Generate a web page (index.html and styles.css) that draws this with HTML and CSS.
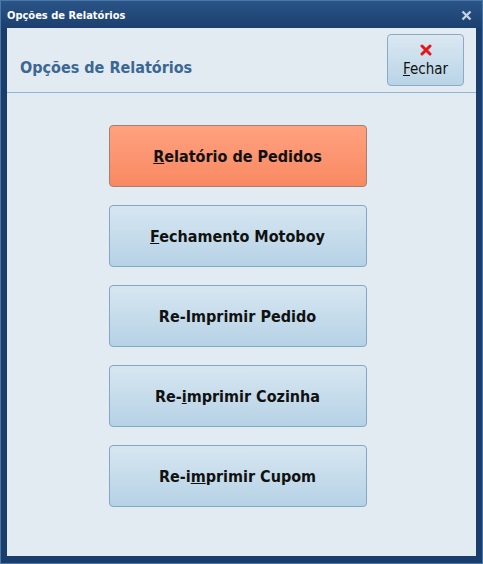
FILE: index.html
```html
<!DOCTYPE html>
<html lang="pt-BR">
<head>
    <meta charset="UTF-8">
    <title>Opções de Relatórios</title>
    <link rel="stylesheet" href="styles.css">
</head>
<body>
<div class="window">
    <div class="titlebar">
        <span class="title">Opções de Relatórios</span>
        <svg class="close" width="11" height="11" viewBox="0 0 11 11">
            <path d="M1.5 1.5 L9.5 9.5 M9.5 1.5 L1.5 9.5" stroke="#c3d2e3" stroke-width="2.4"/>
        </svg>
    </div>
    <div class="client">
        <div class="header">
            <h1 class="heading">Opções de Relatórios</h1>
            <button class="btn-fechar">
                <svg width="12" height="12" viewBox="0 0 12 12">
                    <path d="M2 2 L10 10 M10 2 L2 10" stroke="#e8141a" stroke-width="3" stroke-linecap="round"/>
                </svg>
                <span><u>F</u>echar</span>
            </button>
        </div>
        <div class="menu">
            <button class="btn-opt active"><u>R</u>elatório de Pedidos</button>
            <button class="btn-opt"><u>F</u>echamento Motoboy</button>
            <button class="btn-opt">Re-Imprimir Pedido</button>
            <button class="btn-opt">Re-<u>i</u>mprimir Cozinha</button>
            <button class="btn-opt">Re-i<u>m</u>primir Cupom</button>
        </div>
    </div>
</div>
</body>
</html>
```

FILE: styles.css
```css
body, html {
    margin: 0;
    height: 100%;
    font-family: "DejaVu Sans Condensed", "DejaVu Sans", sans-serif;
}

.window {
    width: 483px;
    height: 564px;
    box-sizing: border-box;
    background: #1b3d6b;
    border: 1px solid #4a78a8;
    padding: 0 6px 7px 6px;
    display: flex;
    flex-direction: column;
}

.titlebar {
    height: 27px;
    display: flex;
    align-items: center;
    justify-content: space-between;
    background: linear-gradient(#2a5487, #1c406f);
    margin: 0 -6px;
    padding: 0 6px 0 6px;
}

.title {
    color: #fff;
    font-size: 11px;
    font-weight: bold;
    padding-top: 1px;
}

.close {
    margin-right: 4px;
    margin-top: 1px;
}

.client {
    flex: 1;
    background: #e2eaf2;
    display: flex;
    flex-direction: column;
}

.header {
    height: 64px;
    border-bottom: 1px solid #94b5d2;
    display: flex;
    align-items: center;
    justify-content: space-between;
    padding: 0 12px 0 13px;
}

.heading {
    margin: 14px 0 0 0;
    font-size: 16px;
    color: #3b6892;
    font-weight: bold;
}

.btn-fechar {
    width: 77px;
    height: 52px;
    margin-top: -1px;
    border: 1px solid #89abc7;
    border-radius: 4px;
    background: linear-gradient(#dbe8f2, #b9d4e6);
    display: flex;
    flex-direction: column;
    align-items: center;
    justify-content: center;
    gap: 4px;
    padding: 2px 0 0 0;
    font-family: "DejaVu Sans Condensed", "DejaVu Sans", sans-serif;
    font-size: 15px;
    color: #111;
}

.menu {
    display: flex;
    flex-direction: column;
    align-items: center;
    gap: 18px;
    padding: 32px 8px 0 0;
}

.btn-opt {
    width: 258px;
    height: 62px;
    border: 1px solid #82a8c6;
    border-radius: 4px;
    background: linear-gradient(#d7e6f1, #b5d2e5);
    font-family: "DejaVu Sans Condensed", "DejaVu Sans", sans-serif;
    font-size: 16px;
    font-weight: bold;
    color: #111;
    padding: 0;
}

.btn-opt.active {
    border-color: #a67f70;
    background: linear-gradient(#ffa17f, #f88962);
}
```
